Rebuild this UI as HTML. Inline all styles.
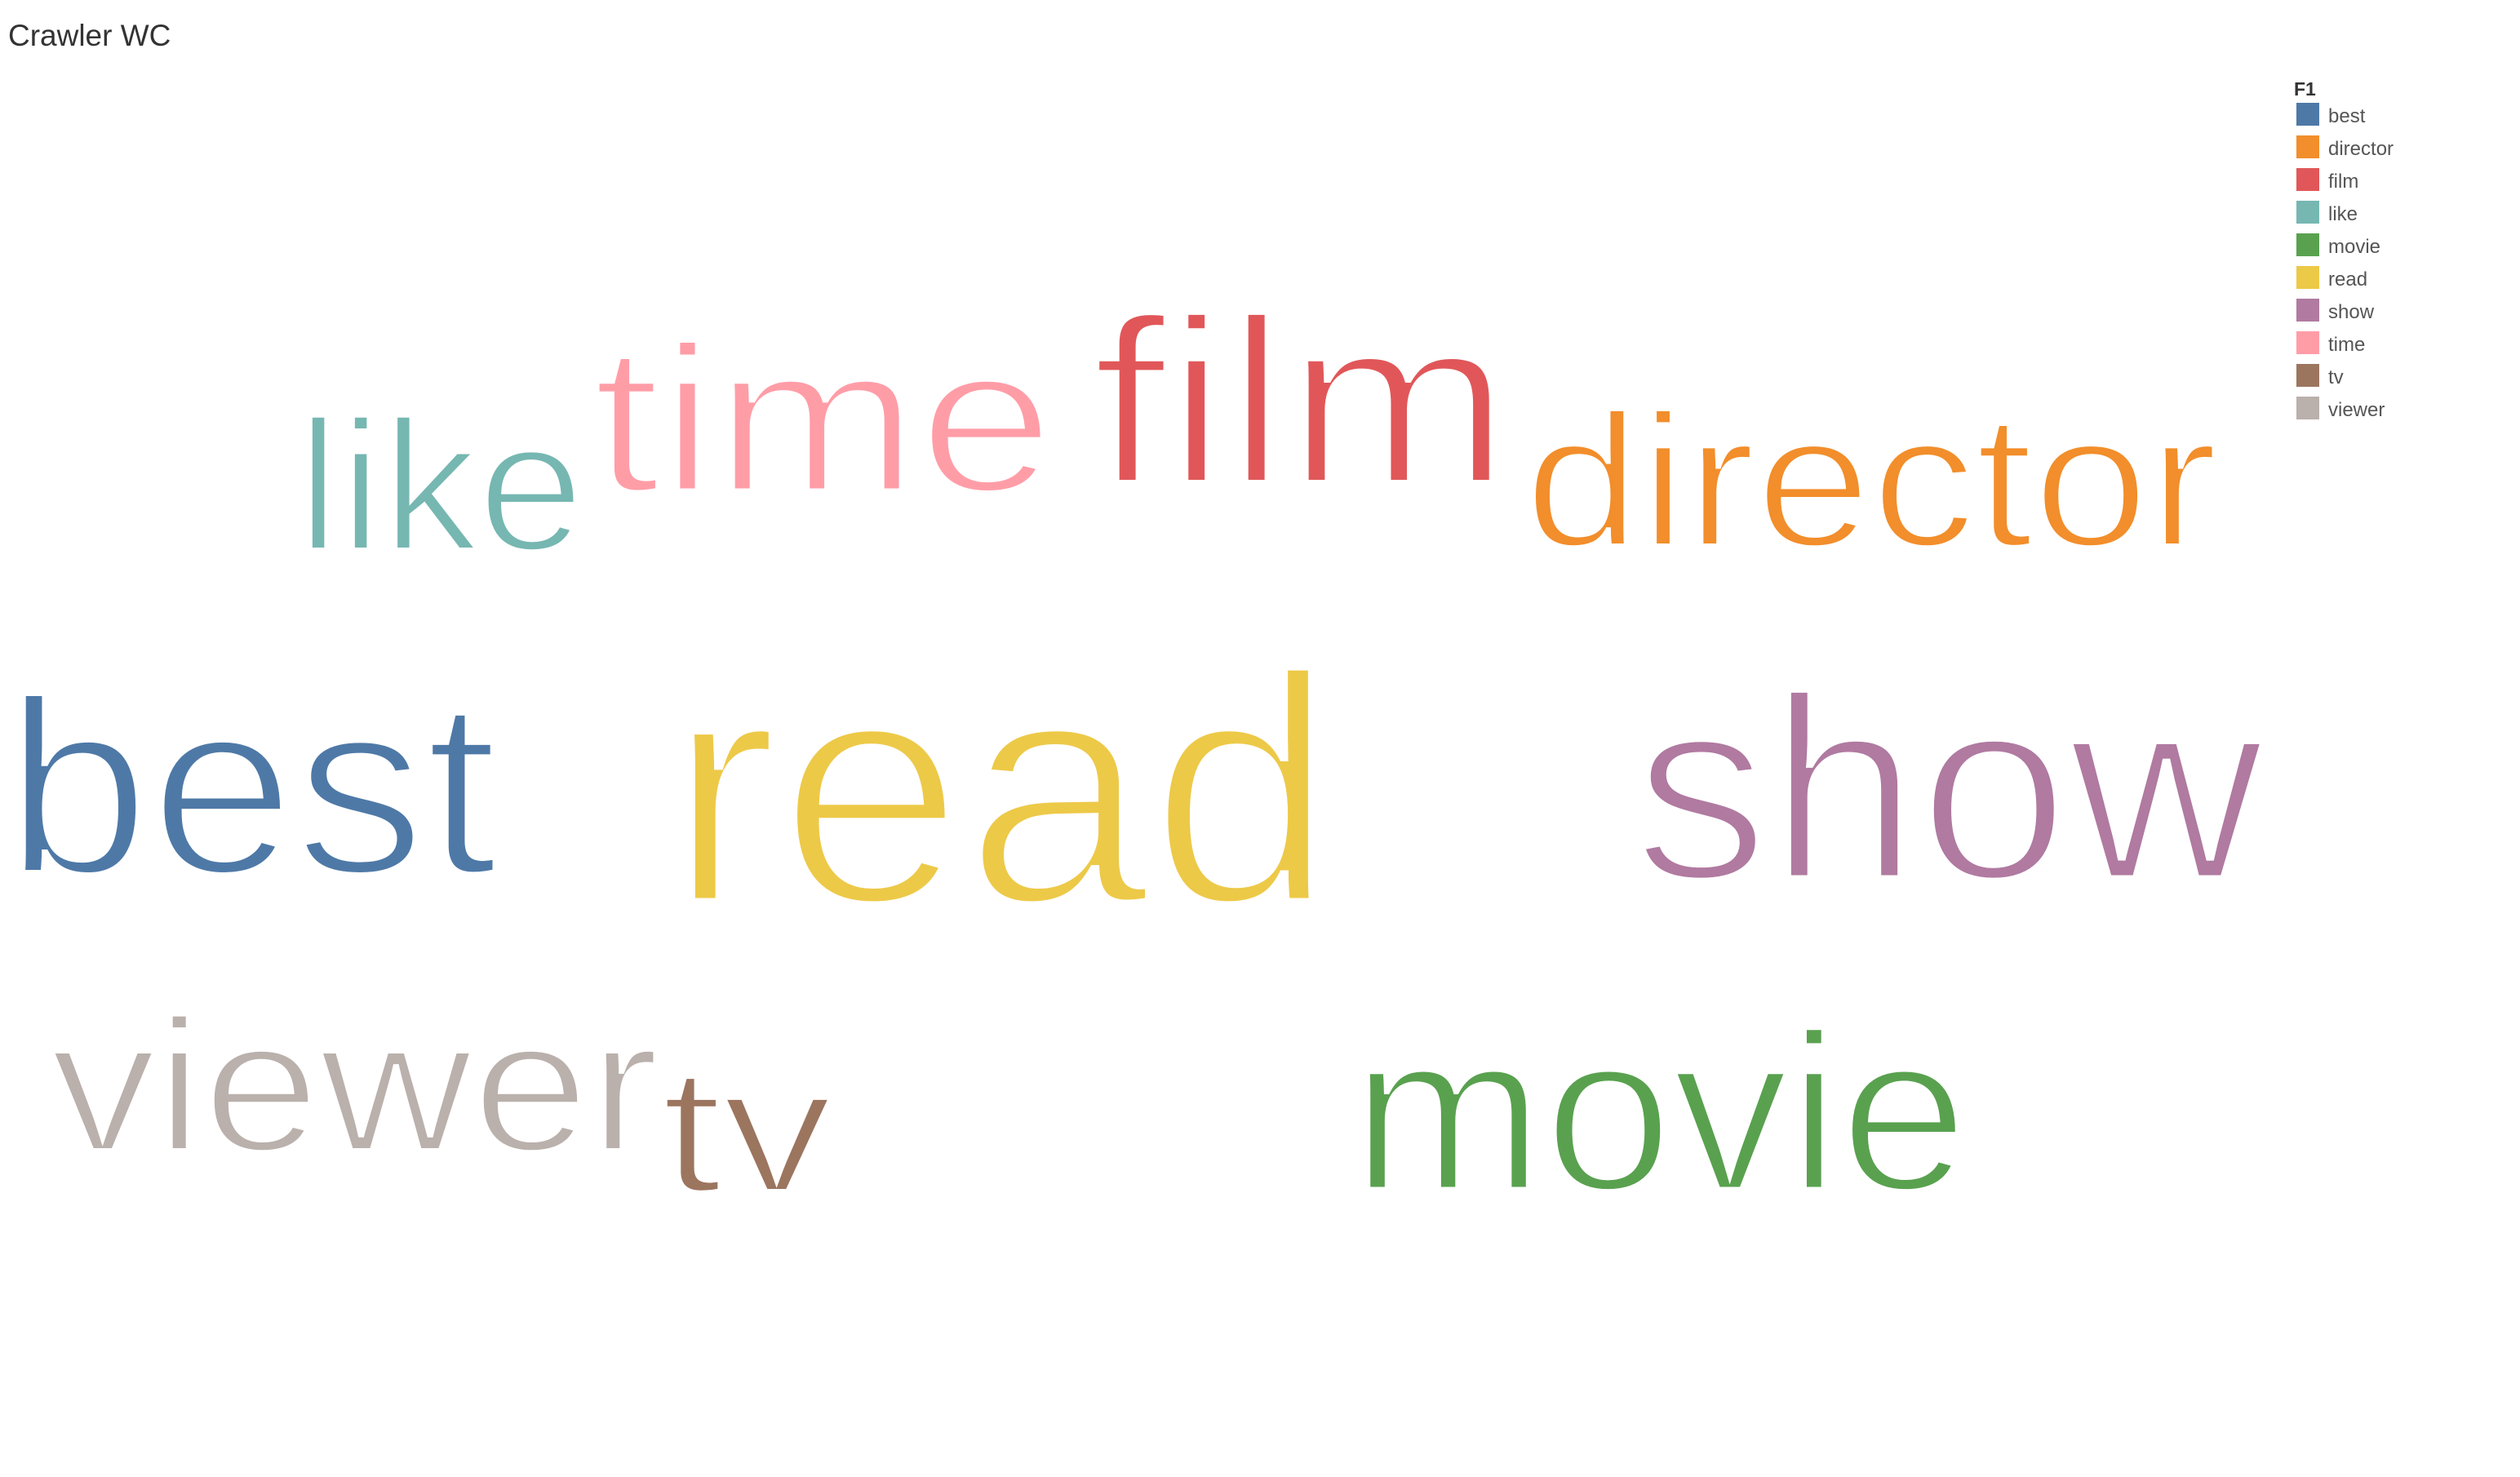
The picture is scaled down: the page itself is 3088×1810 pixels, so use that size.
<!DOCTYPE html>
<html><head><meta charset="utf-8"><style>
html,body{margin:0;padding:0;background:#fff;}
svg{display:block;}
text{font-family:"Liberation Sans",sans-serif;}
</style></head><body>
<svg width="3088" height="1810" viewBox="0 0 3088 1810" xmlns="http://www.w3.org/2000/svg">
<rect width="3088" height="1810" fill="#fff"/>
<text x="10" y="56" font-size="37" fill="#333">Crawler WC</text>

<g stroke="#fff" paint-order="normal">
<text x="364" y="674" font-size="228" fill="#76b7b2" stroke-width="6" textLength="352" lengthAdjust="spacingAndGlyphs">like</text>
<text x="726" y="602" font-size="256" fill="#ff9da7" stroke-width="7" textLength="566" lengthAdjust="spacingAndGlyphs">time</text>
<text x="1338" y="592" font-size="290" fill="#e15759" stroke-width="8" textLength="513" lengthAdjust="spacingAndGlyphs">film</text>
<text x="1868" y="669" font-size="232" fill="#f28e2b" stroke-width="6" textLength="850" lengthAdjust="spacingAndGlyphs">director</text>
<text x="6" y="1070" font-size="305" fill="#4e79a7" stroke-width="8" textLength="604" lengthAdjust="spacingAndGlyphs">best</text>
<text x="818" y="1106" font-size="400" fill="#edc948" stroke-width="11" textLength="818" lengthAdjust="spacingAndGlyphs">read</text>
<text x="2002" y="1077" font-size="321" fill="#b07aa1" stroke-width="9" textLength="772" lengthAdjust="spacingAndGlyphs">show</text>
<text x="62" y="1410" font-size="231" fill="#bab0ac" stroke-width="6" textLength="746" lengthAdjust="spacingAndGlyphs">viewer</text>
<text x="810" y="1460" font-size="218" fill="#9c755f" stroke-width="6" textLength="210" lengthAdjust="spacingAndGlyphs">tv</text>
<text x="1656" y="1458" font-size="275" fill="#59a14f" stroke-width="7" textLength="756" lengthAdjust="spacingAndGlyphs">movie</text>
</g>

<text x="2811" y="117" font-size="23" font-weight="bold" fill="#333">F1</text>
<g font-size="24" fill="#555">
<rect x="2814" y="126" width="28" height="28" fill="#4e79a7"/><text x="2853" y="150">best</text>
<rect x="2814" y="166" width="28" height="28" fill="#f28e2b"/><text x="2853" y="190">director</text>
<rect x="2814" y="206" width="28" height="28" fill="#e15759"/><text x="2853" y="230">film</text>
<rect x="2814" y="246" width="28" height="28" fill="#76b7b2"/><text x="2853" y="270">like</text>
<rect x="2814" y="286" width="28" height="28" fill="#59a14f"/><text x="2853" y="310">movie</text>
<rect x="2814" y="326" width="28" height="28" fill="#edc948"/><text x="2853" y="350">read</text>
<rect x="2814" y="366" width="28" height="28" fill="#b07aa1"/><text x="2853" y="390">show</text>
<rect x="2814" y="406" width="28" height="28" fill="#ff9da7"/><text x="2853" y="430">time</text>
<rect x="2814" y="446" width="28" height="28" fill="#9c755f"/><text x="2853" y="470">tv</text>
<rect x="2814" y="486" width="28" height="28" fill="#bab0ac"/><text x="2853" y="510">viewer</text>
</g>
</svg>
</body></html>
